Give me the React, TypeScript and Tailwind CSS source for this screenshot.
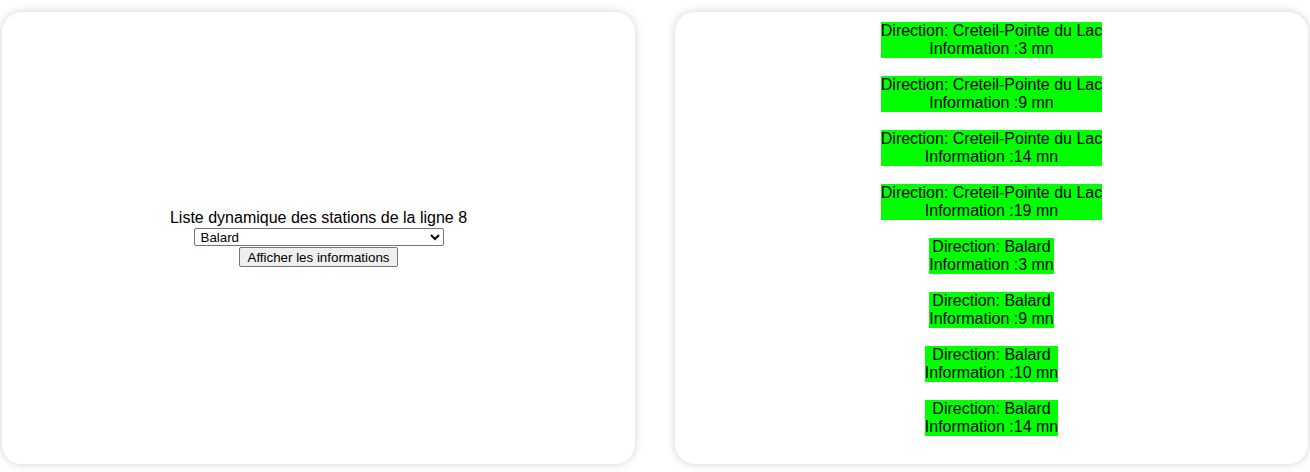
import React from "react";

const items = [
  { d: "Creteil-Pointe du Lac", i: "3" },
  { d: "Creteil-Pointe du Lac", i: "9" },
  { d: "Creteil-Pointe du Lac", i: "14" },
  { d: "Creteil-Pointe du Lac", i: "19" },
  { d: "Balard", i: "3" },
  { d: "Balard", i: "9" },
  { d: "Balard", i: "10" },
  { d: "Balard", i: "14" },
];

export default function App() {
  return (
    <div
      className="w-[1310px] h-[472px] bg-white flex gap-[40px] pl-[2px] pt-[12px] text-black"
      style={{ fontFamily: '"Liberation Sans", Arial, sans-serif' }}
    >
      <div className="w-[633px] h-[452px] rounded-[20px] bg-white shadow-[0_0_10px_rgba(0,0,0,0.18)] flex flex-col items-center justify-center">
        <div className="text-[16px] leading-[18px]">Liste dynamique des stations de la ligne 8</div>
        <select className="w-[250px] h-[18px] text-[13.33px] border border-[#767676] rounded-[2px] bg-white pl-[2px] mt-[1px]">
          <option>Balard</option>
        </select>
        <button className="mt-[1px] h-[20px] px-[7.5px] text-[13.33px] leading-[15px] bg-[#efefef] border border-[#767676] rounded-[2px]">
          Afficher les informations
        </button>
      </div>
      <div className="w-[633px] h-[452px] rounded-[20px] bg-white shadow-[0_0_10px_rgba(0,0,0,0.18)] flex flex-col items-center pt-[10px] gap-[18px]">
        {items.map((it, k) => (
          <div key={k} className="bg-[#00ff00] text-center text-[16px] leading-[18px] h-[36px]">
            <div>Direction: {it.d}</div>
            <div>Information :{it.i} mn</div>
          </div>
        ))}
      </div>
    </div>
  );
}
